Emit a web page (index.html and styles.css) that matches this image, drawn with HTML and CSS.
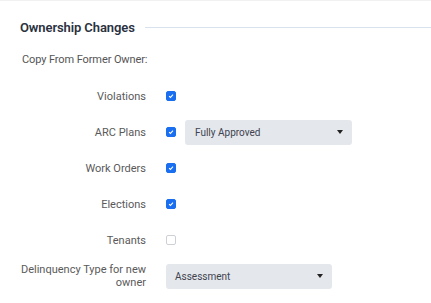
FILE: index.html
```html
<!doctype html>
<html>
<head>
<meta charset="utf-8">
<title>Ownership Changes</title>
<link rel="stylesheet" href="styles.css">
</head>
<body>
<div class="panel">
	<div class="section-title">
		<h2>Ownership Changes</h2>
		<div class="title-line"></div>
	</div>
	<p class="intro">Copy From Former Owner:</p>
	<div class="form">
		<div class="row">
			<label class="lbl">Violations</label>
			<div class="field"><span class="cb on"><svg viewBox="0 0 10 10"><path d="M2.6 5.2 4.3 6.8 7.5 3.4"/></svg></span></div>
		</div>
		<div class="row">
			<label class="lbl">ARC Plans</label>
			<div class="field">
				<span class="cb on"><svg viewBox="0 0 10 10"><path d="M2.6 5.2 4.3 6.8 7.5 3.4"/></svg></span>
				<div class="select wide"><span>Fully Approved</span><i class="caret"></i></div>
			</div>
		</div>
		<div class="row">
			<label class="lbl">Work Orders</label>
			<div class="field"><span class="cb on"><svg viewBox="0 0 10 10"><path d="M2.6 5.2 4.3 6.8 7.5 3.4"/></svg></span></div>
		</div>
		<div class="row">
			<label class="lbl">Elections</label>
			<div class="field"><span class="cb on"><svg viewBox="0 0 10 10"><path d="M2.6 5.2 4.3 6.8 7.5 3.4"/></svg></span></div>
		</div>
		<div class="row">
			<label class="lbl">Tenants</label>
			<div class="field"><span class="cb"></span></div>
		</div>
		<div class="row">
			<label class="lbl">Delinquency Type for new owner</label>
			<div class="field">
				<div class="select"><span>Assessment</span><i class="caret"></i></div>
			</div>
		</div>
	</div>
</div>
</body>
</html>
```

FILE: styles.css
```css
*{ margin:0; padding:0; box-sizing:border-box; }
body{ background:#fff; font-family:"Roboto","Liberation Sans",sans-serif; color:#555; border-top:1px solid #f0f1f3; }
.panel{ padding:16px 0 0 20px; }
.section-title{ display:flex; align-items:center; gap:10px; height:20px; }
.section-title h2{ font-size:13px; font-weight:600; color:#2a3140; white-space:nowrap; letter-spacing:-0.1px; }
.title-line{ flex:1; height:1px; background:#d8e1ee; }
.intro{ margin:16px 0 0 2px; font-size:11px; line-height:14px; color:#555; letter-spacing:-0.1px; }
.form{ margin-top:11px; }
.row{ display:grid; grid-template-columns:126px auto; column-gap:20px; align-items:center; min-height:36px; }
.lbl{ text-align:right; font-size:11px; line-height:13px; color:#5a5a5a; }
.field{ display:flex; align-items:center; gap:9px; }
.cb{ width:10px; height:10px; border-radius:2px; border:1px solid #cdd1d6; background:#fff; display:block; }
.cb.on{ background:#1a6ff0; border-color:#1a6ff0; }
.cb svg{ display:block; width:8px; height:8px; fill:none; stroke:#fff; stroke-width:1.3; }
.select{ display:flex; align-items:center; justify-content:space-between; width:166px; height:25px; padding:0 9px; background:#e4e7eb; border-radius:3px; font-size:10px; color:#3d4350; }
.select.wide{ width:167px; padding-left:10px; }
.caret{ width:0; height:0; border-left:3.5px solid transparent; border-right:3.5px solid transparent; border-top:4px solid #222; }
```
